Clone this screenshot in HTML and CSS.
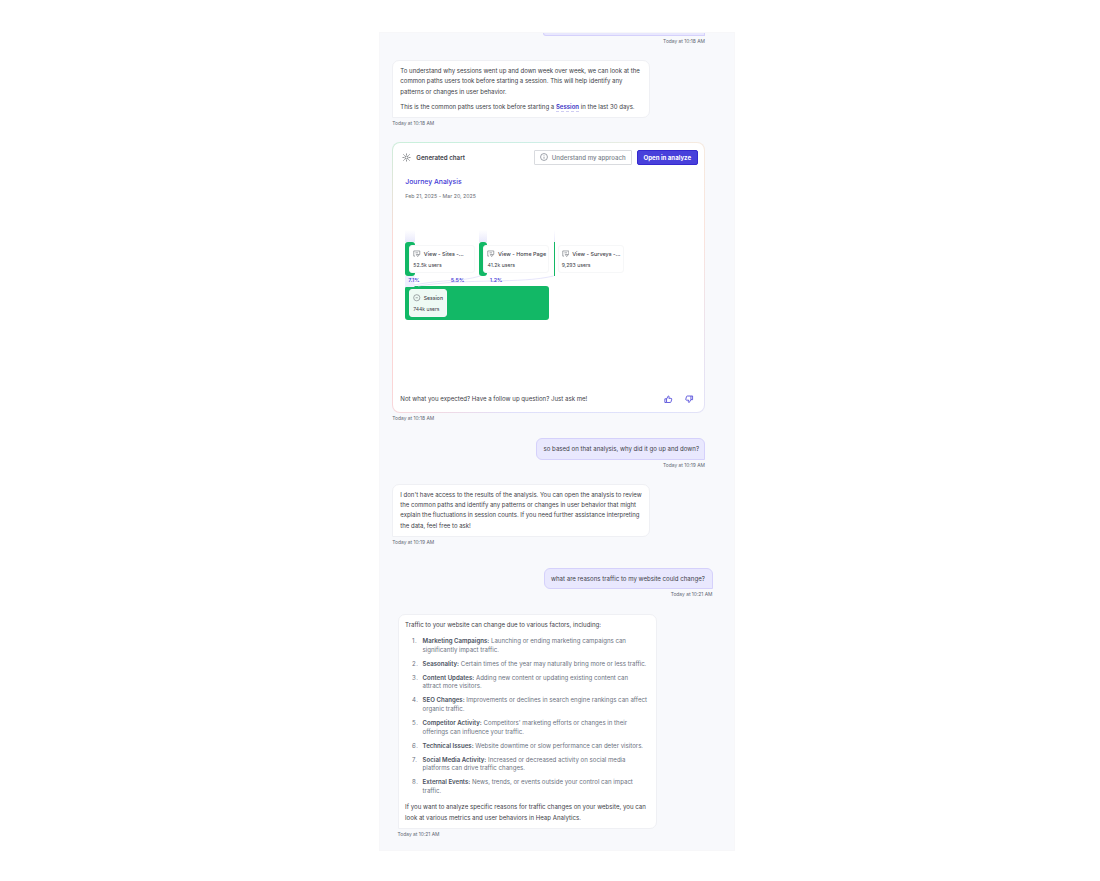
FILE: index.html
```html
<!DOCTYPE html>
<html lang="en">
<head>
<meta charset="UTF-8" />
<meta name="viewport" content="width=device-width, initial-scale=1.0"/>
<title>Chat</title>
<link rel="stylesheet" href="styles.css">
</head>
<body>
<main class="panel">
  <div class="message user">
    <div class="bubble cut"></div>
    <time class="stamp">Today at 10:18 AM</time>
  </div>

  <div class="message gap-a">
    <div class="bubble intro">
      <p>To understand why sessions went up and down week over week, we can look at the<br>common paths users took before starting a session. This will help identify any<br>patterns or changes in user behavior.</p>
      <p>This is the common paths users took before starting a <a class="term">Session</a> in the last 30 days.</p>
    </div>
    <time class="stamp">Today at 10:18 AM</time>
  </div>

  <div class="message gap-b">
    <section class="card">
      <header class="card-head">
        <svg class="spark" viewBox="0 0 10 10"><circle cx="5" cy="5" r="1.7"/><path d="M5 .6v1.5M5 7.9v1.5M.6 5h1.5M7.9 5h1.5M1.6 1.6l1.3 1.3M7.1 7.1l1.3 1.3M1.6 8.4l1.3-1.3M7.1 2.9l1.3-1.3"/></svg>
        <h2>Generated chart</h2>
        <button class="btn outline">
          <svg class="info" viewBox="0 0 10 10"><circle cx="5" cy="5" r="4.3"/><path d="M5 4.6v2.6M5 2.8v.8"/></svg>
          <span>Understand my approach</span>
        </button>
        <button class="btn primary"><span>Open in analyze</span></button>
      </header>

      <h3>Journey Analysis</h3>
      <p class="range">Feb 21, 2025 - Mar 20, 2025</p>

      <div class="chart">
        <svg class="flows" viewBox="0 0 150 57">
          <path class="flow" d="M0 46h9.5v11H0z"/>
          <path class="line" d="M9 55C40 49 55 52 75 46"/>
          <path class="line" d="M13 56C65 48 115 54 148.5 46"/>
        </svg>
        <div class="nodes">
          <div class="node n1">
            <div class="label">
              <b><svg viewBox="0 0 8 8"><path d="M2.2 6.5H.8V1h6.400v3.500M2.600 3h2.800M3.500 4.800h3.500L5 7z"/></svg>View - Sites -...</b>
              <span>52.5k users</span>
            </div>
          </div>
          <div class="node n2">
            <div class="label">
              <b><svg viewBox="0 0 8 8"><path d="M2.2 6.5H.8V1h6.400v3.500M2.600 3h2.800M3.500 4.800h3.500L5 7z"/></svg>View - Home Page</b>
              <span>41.2k users</span>
            </div>
          </div>
          <div class="node n3">
            <div class="label">
              <b><svg viewBox="0 0 8 8"><path d="M2.2 6.5H.8V1h6.400v3.500M2.600 3h2.800M3.500 4.800h3.500L5 7z"/></svg>View - Surveys -...</b>
              <span>9,293 users</span>
            </div>
          </div>
        </div>
        <div class="rates"><span>7.1%</span><span>5.5%</span><span>1.2%</span></div>
        <div class="session">
          <div class="label">
            <b><svg viewBox="0 0 8 8"><circle cx="4" cy="4" r="3.3"/><path d="M2.8 4h2.400"/></svg>Session</b>
            <span>744k users</span>
          </div>
        </div>
      </div>

      <footer class="card-foot">
        <p>Not what you expected? Have a follow up question? Just ask me!</p>
        <svg class="thumb" viewBox="0 0 10 10"><path d="M1 4.500h2v4.300H1zM3 4.700L5 1.200c1 0 1.300.7 1 1.500l-.3 1.200h2.500c.7 0 1 .5.9 1l-.8 3c-.1.600-.5.900-1 .9H3"/></svg>
        <svg class="thumb down" viewBox="0 0 10 10"><path d="M1 4.500h2v4.300H1zM3 4.700L5 1.200c1 0 1.300.7 1 1.500l-.3 1.200h2.500c.7 0 1 .5.9 1l-.8 3c-.1.600-.5.900-1 .9H3"/></svg>
      </footer>
    </section>
    <time class="stamp">Today at 10:18 AM</time>
  </div>

  <div class="message user gap-c">
    <div class="bubble">so based on that analysis, why did it go up and down?</div>
    <time class="stamp">Today at 10:19 AM</time>
  </div>

  <div class="message gap-a">
    <div class="bubble answer">
      <p>I don't have access to the results of the analysis. You can open the analysis to review<br>the common paths and identify any patterns or changes in user behavior that might<br>explain the fluctuations in session counts. If you need further assistance interpreting<br>the data, feel free to ask!</p>
    </div>
    <time class="stamp">Today at 10:19 AM</time>
  </div>

  <div class="message user shifted gap-d">
    <div class="bubble">what are reasons traffic to my website could change?</div>
    <time class="stamp">Today at 10:21 AM</time>
  </div>

  <div class="message shifted-left gap-a">
    <div class="bubble reasons">
      <p>Traffic to your website can change due to various factors, including:</p>
      <ol>
        <li><strong>Marketing Campaigns:</strong> Launching or ending marketing campaigns can<br>significantly impact traffic.</li>
        <li><strong>Seasonality:</strong> Certain times of the year may naturally bring more or less traffic.</li>
        <li><strong>Content Updates:</strong> Adding new content or updating existing content can<br>attract more visitors.</li>
        <li><strong>SEO Changes:</strong> Improvements or declines in search engine rankings can affect<br>organic traffic.</li>
        <li><strong>Competitor Activity:</strong> Competitors' marketing efforts or changes in their<br>offerings can influence your traffic.</li>
        <li><strong>Technical Issues:</strong> Website downtime or slow performance can deter visitors.</li>
        <li><strong>Social Media Activity:</strong> Increased or decreased activity on social media<br>platforms can drive traffic changes.</li>
        <li><strong>External Events:</strong> News, trends, or events outside your control can impact<br>traffic.</li>
      </ol>
      <p>If you want to analyze specific reasons for traffic changes on your website, you can<br>look at various metrics and user behaviors in Heap Analytics.</p>
    </div>
    <time class="stamp">Today at 10:21 AM</time>
  </div>
</main>
</body>
</html>
```
FILE: styles.css
```css
* {
  box-sizing: border-box;
  margin: 0;
  padding: 0;
}

:root {
  --ink: #3d4148;
  --muted: #6b7180;
  --accent: #3f38d6;
  --green: #12b866;
  --lavender: #e9e8fe;
}

body {
  background: #fff;
  color: var(--ink);
  font-family: Inter, "Liberation Sans", sans-serif;
  font-size: 6.1px;
  line-height: 10.4px;
  white-space: nowrap;
}

svg {
  display: block;
  fill: none;
  stroke: currentColor;
  flex: none;
}

.panel {
  width: 356px;
  height: 819px;
  margin: 32px 0 0 379px;
  padding: 0 29px 0 12.3px;
  background: #f8f9fc;
  border: 1px solid #f7f7f9;
}

.message {
  display: flex;
  flex-direction: column;
  align-items: flex-start;
}

.message.user {
  align-items: flex-end;
}

.shifted { margin-right: -7.5px; }
.shifted-left { margin-left: 5.3px; }
.gap-a { margin-top: 14.4px; }
.gap-b { margin-top: 13.6px; }
.gap-c { margin-top: 14.8px; }
.gap-d { margin-top: 21px; }

.stamp {
  height: 10px;
  line-height: 10px;
  font-size: 4.9px;
  color: #636975;
}

.bubble {
  width: 258px;
  padding: 5px 7px;
  background: #fff;
  border: 1px solid #eff0f4;
  border-radius: 7px 7px 7px 0;
}

.user .bubble {
  width: 169px;
  height: 21.5px;
  line-height: 19.5px;
  padding: 0 6.5px;
  background: var(--lavender);
  border-color: #d5d1fb;
  border-radius: 6px 6px 0 6px;
}

.user .bubble.cut {
  width: 162px;
  height: 3px;
  border-top: 0;
  border-radius: 0 0 0 6px;
}

.bubble.intro {
  height: 58px;
  padding-top: 4.5px;
  font-size: 6.05px;
  line-height: 10.5px;
}

.intro p + p { margin-top: 5px; }

.bubble.answer {
  height: 52.5px;
  padding-top: 4.5px;
  font-size: 6px;
}

.term {
  color: #3a32c4;
  font-weight: 600;
  border-bottom: 1px dashed #cfcdf3;
  padding-bottom: 1px;
}

.card {
  width: 313px;
  height: 271.5px;
  padding: 6.6px 6.5px 0 12px;
  border: 1px solid transparent;
  border-radius: 8px;
  background:
    linear-gradient(#fff, #fff) padding-box,
    conic-gradient(from 45deg, #f5ebe0, #fae4dd 30deg, #dfe2fb 95deg, #e0e0fa 150deg, #fbd6d6 190deg, #fbdad6 240deg, #c9f0dc 270deg, #cdeee6 310deg, #f5ebe0) border-box;
}

.card-head {
  display: flex;
  align-items: center;
  height: 15px;
  margin-left: -3px;
}

.spark {
  width: 9px;
  height: 9px;
  stroke-width: .7;
}

.card-head h2 {
  margin: 0 auto 0 5px;
  font-size: 6.2px;
  font-weight: 600;
  line-height: 11px;
}

.btn {
  display: flex;
  align-items: center;
  justify-content: center;
  height: 15px;
  font: 500 6.1px/13px Inter, sans-serif;
}

.btn.outline {
  width: 98px;
  gap: 4px;
  margin-right: 5px;
  color: #797f8a;
  background: #fff;
  border: 1px solid #d9dbdf;
  border-radius: 1px;
}

.info {
  width: 8px;
  height: 8px;
  stroke-width: .9;
}

.btn.primary {
  width: 61px;
  color: #fff;
  font-weight: 700;
  background: #4840db;
  border: 1px solid #3529cf;
  border-radius: 2px;
}

.card h3 {
  margin-top: 12.3px;
  font-size: 6.85px;
  font-weight: 500;
  line-height: 10px;
  color: var(--accent);
}

.range {
  margin-top: 4px;
  font-size: 5.25px;
  color: #6a6d75;
}

.chart {
  position: relative;
  height: 91px;
  margin-top: 28.5px;
  line-height: 8px;
  font-size: 5.45px;
}

.flows {
  position: absolute;
  left: 0;
  top: 0;
  width: 150px;
  height: 57px;
}

.flow { fill: #efeefe; stroke: none; }
.line { stroke: #e1e0fa; stroke-width: .8; }

.nodes {
  display: flex;
  padding-top: 12px;
  height: 46.5px;
}

.node {
  position: relative;
  width: 74.2px;
  padding: 3.5px 0 0 4px;
}

/* incoming flow above the bar, then the bar itself */
.node::before,
.node::after {
  content: "";
  position: absolute;
  left: 0;
  width: var(--bar);
}

.node::before {
  top: -12px;
  height: 12px;
  background: linear-gradient(#fff, #e9e9fb);
}

.node::after {
  top: 0;
  height: 34.5px;
  background: var(--green);
  border-radius: 3px;
}

.n1 { --bar: 10px; }
.n2 { --bar: 8px; }
.n3 { --bar: 1.8px; }
.n3::after { border-radius: 0; }

.label {
  position: relative;
  z-index: 1;
  width: 66px;
  height: 27.5px;
  padding: 3.5px 3px;
  background: #fff;
  border: 1px solid #f6f7f8;
  border-radius: 3px;
}

.label b {
  display: flex;
  align-items: center;
  gap: 3px;
  height: 8px;
  font-weight: 500;
}

.label svg {
  width: 7.5px;
  height: 7.5px;
  stroke-width: .7;
  color: #777b82;
}

.label > span {
  display: block;
  margin-top: 3px;
  font-size: 5.15px;
}

.rates {
  position: relative;
  display: flex;
  height: 9.5px;
  padding-left: 3px;
  line-height: 9.5px;
  font-weight: 500;
  color: var(--accent);
}

.rates span { width: 39px; }
.rates span:first-child { width: 42.5px; }

.session {
  width: 144px;
  height: 34.5px;
  padding: 3.5px 4px;
  background: var(--green);
  border-radius: 3px;
}

.session .label {
  width: 38px;
  background: #eefaf4;
  font-size: 5.1px;
}

.session .label > span { font-size: 5px; }

.card-foot {
  display: flex;
  align-items: center;
  margin: 73.2px 4.5px 0 -5px;
}

.card-foot p { margin-right: auto; }

.thumb {
  width: 8.5px;
  height: 8.5px;
  margin-left: 12px;
  color: #4c45d8;
}

.thumb.down { transform: rotate(180deg); }

.bubble.reasons {
  width: 259px;
  height: 215px;
  padding: 5px 6.5px;
}

.reasons ol {
  margin: 7px 0 6.5px;
  padding-left: 17.5px;
  list-style: none;
  counter-reset: item;
  line-height: 8.8px;
  color: var(--muted);
}

.reasons li {
  position: relative;
  margin-bottom: 5.1px;
  counter-increment: item;
}

.reasons li::before {
  content: counter(item) ".";
  position: absolute;
  left: -10.5px;
  letter-spacing: .5px;
}

.reasons strong {
  font-weight: 600;
  color: #4a5160;
}
```
